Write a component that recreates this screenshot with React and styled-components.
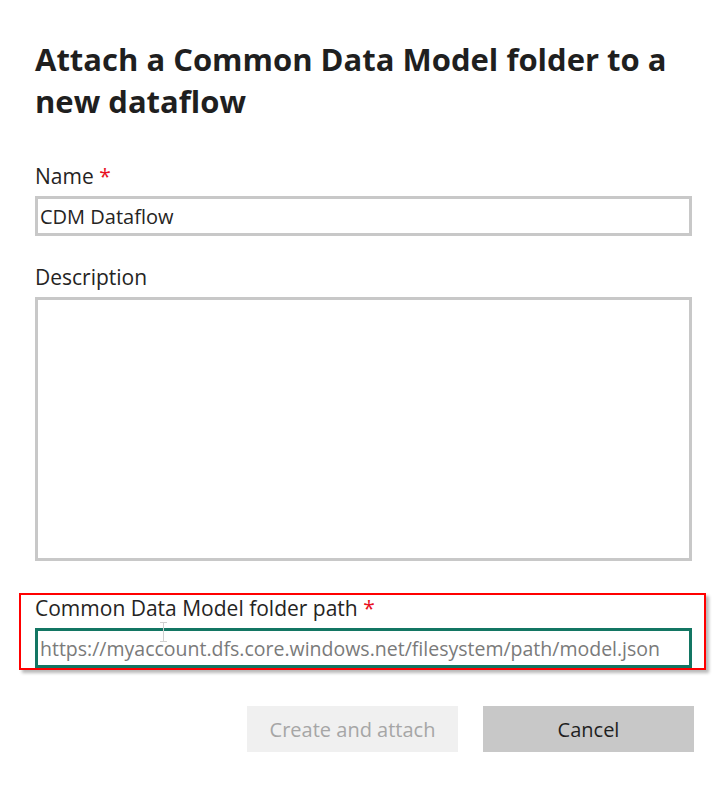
import React from "react";
import styled, { createGlobalStyle } from "styled-components";

const GlobalStyle = createGlobalStyle`
  body {
    margin: 0;
    background: #ffffff;
    font-family: "Open Sans", "Noto Sans", sans-serif;
    color: #252423;
  }
`;

export default function App() {
  return (
    <>
      <GlobalStyle />
      <Dialog>
        <Title>Attach a Common Data Model folder to a new dataflow</Title>

        <Field $top={40}>
          <Label>
            Name <Required>*</Required>
          </Label>
          <TextInput defaultValue="CDM Dataflow" />
        </Field>

        <Field $top={27}>
          <Label>Description</Label>
          <TextArea />
        </Field>

        <Highlight>
          <Label $tight>
            Common Data Model folder path <Required>*</Required>
          </Label>
          <PathWrap>
            <TextInput
              $focused
              placeholder="https://myaccount.dfs.core.windows.net/filesystem/path/model.json"
            />
            <Cursor />
          </PathWrap>
        </Highlight>

        <Actions>
          <Button disabled>Create and attach</Button>
          <Button $secondary>Cancel</Button>
        </Actions>
      </Dialog>
    </>
  );
}

const Dialog = styled.div`
  width: 657px;
  padding: 38px 0 0 35px;
`;

const Title = styled.h1`
  margin: 0;
  font-size: 31px;
  line-height: 42px;
  font-weight: 700;
  color: #1f1f1f;
`;

const Field = styled.div`
  display: flex;
  flex-direction: column;
  gap: 6px;
  margin-top: ${(p) => p.$top}px;
`;

const Label = styled.label`
  font-size: 21px;
  line-height: ${(p) => (p.$tight ? "26px" : "28px")};
  color: #252423;
`;

const Required = styled.span`
  color: #e81123;
`;

const TextInput = styled.input`
  box-sizing: border-box;
  width: 100%;
  height: 40px;
  margin: 0;
  padding: 0 2px;
  border: 3px solid ${(p) => (p.$focused ? "#137663" : "#c8c8c8")};
  font-family: inherit;
  font-size: ${(p) => (p.$focused ? "19.5px" : "20px")};
  color: #252423;
  outline: none;
  background: #fff;

  &::placeholder {
    color: #7a7a7a;
  }
`;

const TextArea = styled.textarea`
  box-sizing: border-box;
  width: 100%;
  height: 264px;
  margin: 0;
  border: 3px solid #c8c8c8;
  resize: none;
  outline: none;
  font-family: inherit;
`;

const Highlight = styled.div`
  display: flex;
  flex-direction: column;
  gap: 7px;
  margin: 32px -14px 0 -16px;
  padding: 0 12px 0 14px;
  border: 2px solid #ff0000;
  box-shadow: 3px 3px 3px rgba(0, 0, 0, 0.28);
`;

const PathWrap = styled.div`
  position: relative;
`;

const Cursor = styled.span`
  position: absolute;
  left: 128px;
  top: -6px;
  width: 1px;
  height: 20px;
  background: #d0d0d0;

  &::before,
  &::after {
    content: "";
    position: absolute;
    left: -3px;
    width: 7px;
    height: 1px;
    background: #d0d0d0;
  }
  &::before {
    top: 0;
  }
  &::after {
    bottom: 0;
  }
`;

const Actions = styled.div`
  display: flex;
  justify-content: flex-end;
  gap: 25px;
  margin: 36px -2px 0 0;
`;

const Button = styled.button`
  width: 211px;
  height: 46px;
  border: none;
  font-family: inherit;
  font-size: 20px;
  background: ${(p) => (p.$secondary ? "#c8c8c8" : "#f0f0f0")};
  color: ${(p) => (p.$secondary ? "#1f1f1f" : "#a6a6a6")};
  cursor: pointer;

  &:disabled {
    cursor: default;
  }
`;
